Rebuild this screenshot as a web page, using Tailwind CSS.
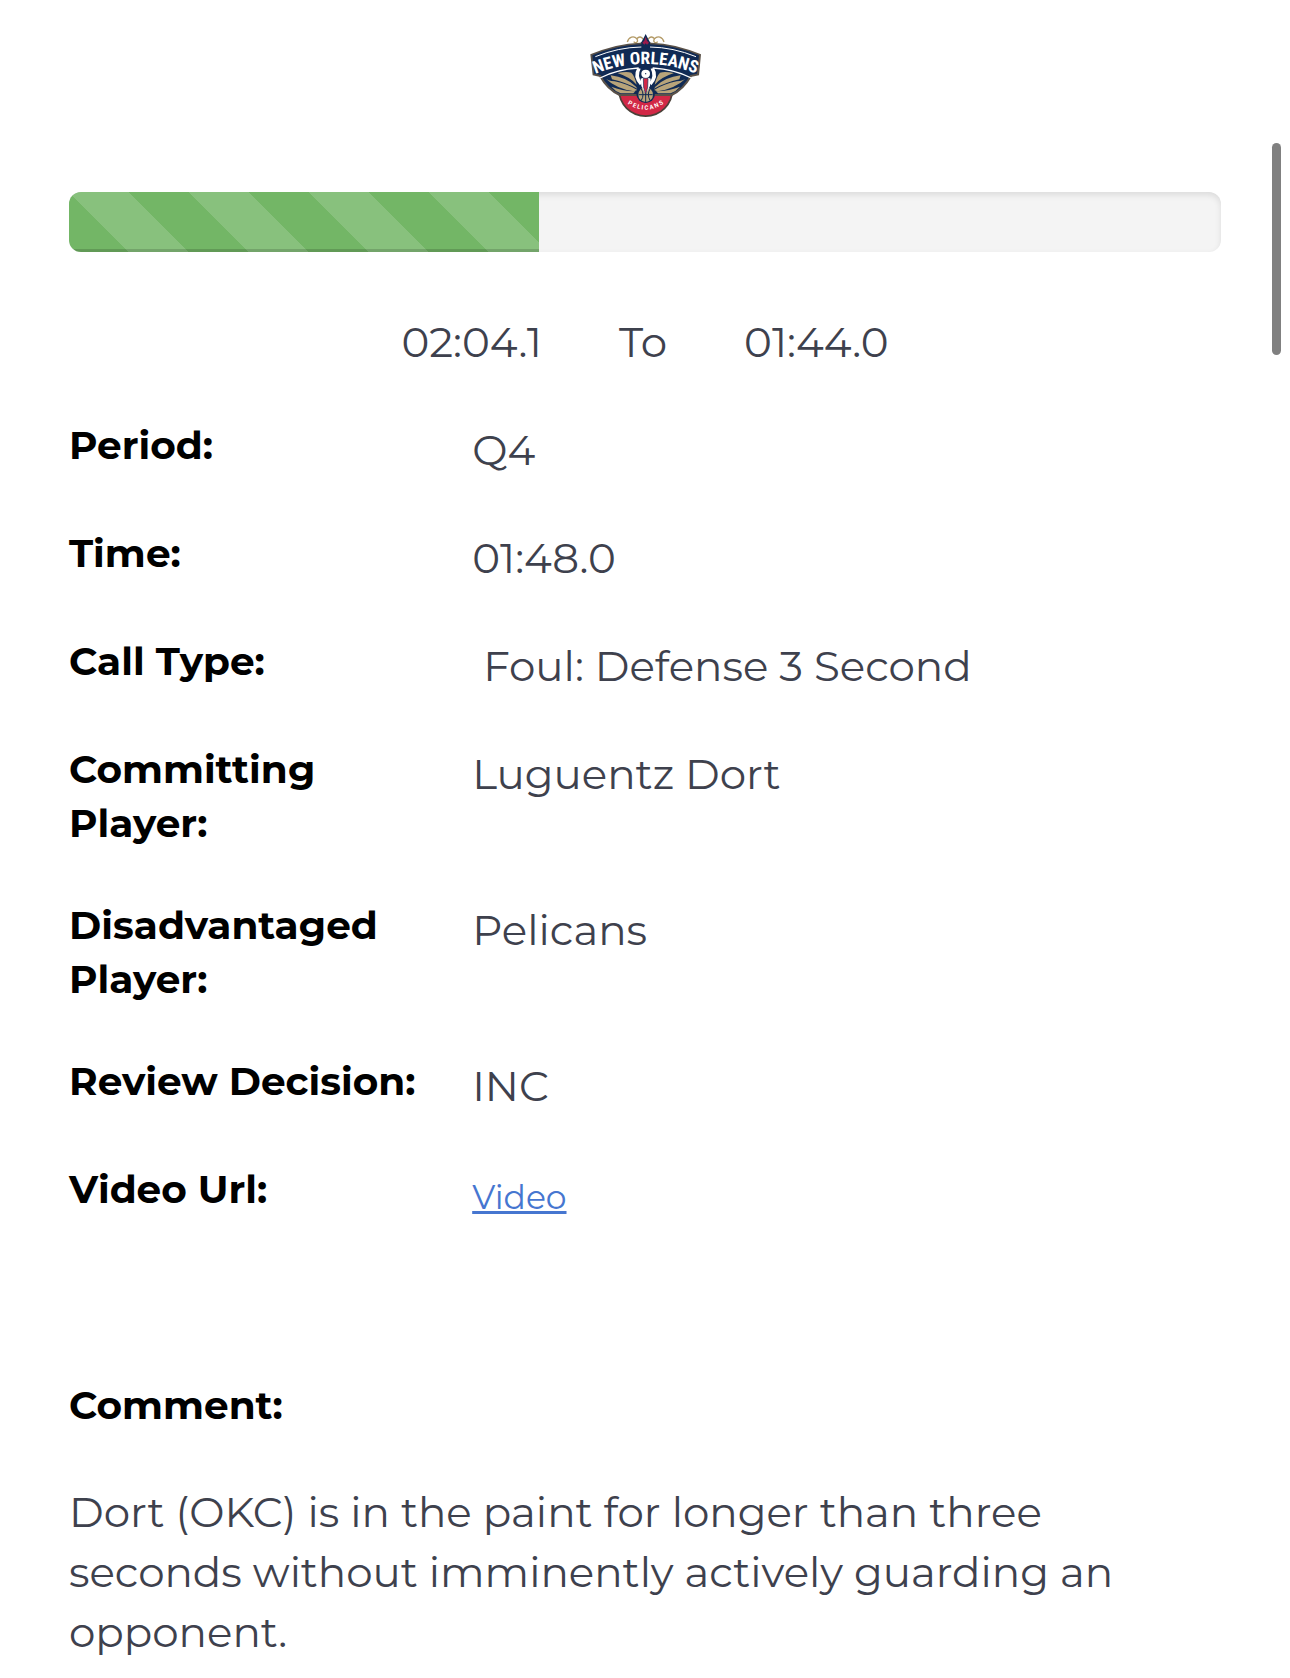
<!DOCTYPE html>
<html lang="en">
<head>
  <meta charset="UTF-8" />
  <title>Last Two Minute Report</title>
  <meta name="viewport" content="width=device-width, initial-scale=1.0" />
  <script src="https://cdn.jsdelivr.net/npm/@tailwindcss/browser@4"></script>
</head>
<body class="relative bg-white font-[Montserrat,Inter,sans-serif] text-[#3e414d]">

  <!-- scroll indicator -->
  <div class="absolute right-[9px] top-[143px] h-[212px] w-[9px] rounded-full bg-[#808080]"></div>

  <header class="flex justify-center pt-6">
    <svg class="h-[100px] w-[130px]" viewBox="0 0 390 300" role="img" aria-label="New Orleans Pelicans">
      <!-- crown -->
      <g fill="none" stroke="#b39a66" stroke-width="4">
        <path d="M142 54c4-16 20-20 28-10s-4 16-9 9M252 54c-4-16-20-20-28-10s4 16 9 9M170 44c8-8 14-6 20 2M224 44c-8-8-14-6-20 2" />
      </g>
      <!-- ball and red base -->
      <circle cx="197" cy="196" r="83" fill="#4a4038" />
      <circle cx="197" cy="196" r="78" fill="#d22846" />
      <!-- shield -->
      <path d="M31 91Q110 58 180 56L197 50L214 56Q284 58 363 91L357 154L335 158Q312 198 276 216L118 216Q80 198 58 158L38 154Z" fill="#5a5148" />
      <path d="M37 94Q112 63 182 61H212Q282 63 357 94L351 149L331 153Q309 194 273 210L121 210Q84 194 62 153L43 149Z" fill="#102a54" />
      <path d="M197 30L189 46L183 56L188 72H206L211 56L205 46Z" fill="#102a54" />
      <path d="M197 38L201 50L207 56L201 62L197 58L193 62L187 56L193 50Z" fill="#9b1b4b" />
      <path d="M46 98Q115 70 184 69M210 69Q279 70 348 98" fill="none" stroke="#fff" stroke-width="3" />
      <path d="M60 162Q110 136 176 132M218 132Q284 136 334 162" fill="none" stroke="#fff" stroke-width="4" />
      <path id="arc" d="M34 154Q115 120 197 120T360 154" fill="none" />
      <text class="font-['Liberation_Sans_Narrow','Roboto_Condensed',Roboto,sans-serif] text-[52px] font-bold" fill="#fff" text-anchor="middle"><textPath href="#arc" startOffset="50%">NEW ORLEANS</textPath></text>
      <!-- wings -->
      <g fill="#b8a47a">
        <path d="M112 147Q140 142 154 146Q164 156 170 182Q152 160 112 147Z" />
        <path d="M92 154Q140 160 168 188L172 194Q138 176 96 166Z" />
        <path d="M72 160Q84 172 104 172Q142 180 172 198L162 202Q110 196 72 160Z" />
        <path d="M94 188Q124 200 166 202L160 208H122Q106 202 94 188Z" />
        <path d="M282 147Q254 142 240 146Q230 156 224 182Q242 160 282 147Z" />
        <path d="M302 154Q254 160 226 188L222 194Q256 176 298 166Z" />
        <path d="M322 160Q310 172 290 172Q252 180 222 198L232 202Q284 196 322 160Z" />
        <path d="M300 188Q270 200 228 202L234 208H272Q288 202 300 188Z" />
      </g>
      <!-- pelican -->
      <path d="M172 132Q156 158 180 184L186 176Q170 156 182 134ZM222 132Q238 158 214 184L208 176Q224 156 212 134Z" fill="#fff" />
      <circle cx="197" cy="209" r="28" fill="#102a54" />
      <circle cx="197" cy="212" r="22" fill="#b8a47a" />
      <path d="M176 212H218M197 190V234M184 195Q194 212 184 229M210 195Q200 212 210 229" fill="none" stroke="#102a54" stroke-width="3" />
      <path d="M184 149Q184 137 197 137T210 149Q210 161 197 161T184 149Z" fill="#fff" />
      <path d="M182 164L197 158L212 164L210 186L197 210L184 186Z" fill="#fff" />
      <path d="M190 163H204L203 190L197 211L191 190Z" fill="#d22846" stroke="#102a54" stroke-width="2" />
      <circle cx="197" cy="149" r="2" fill="#102a54" />
      <path id="base" d="M133 232Q197 282 261 232" fill="none" />
      <text class="font-[Roboto,sans-serif] text-[18px] font-bold" fill="#fff" text-anchor="middle"><textPath href="#base" startOffset="50%">P E L I C A N S</textPath></text>
    </svg>
  </header>

  <main class="px-[69px] pt-[68px]">

    <div class="h-[60px] overflow-hidden rounded-xl bg-[#f4f4f4] shadow-[inset_0_3px_6px_rgba(0,0,0,0.1)]" role="progressbar" aria-valuenow="41" aria-valuemin="0" aria-valuemax="100">
      <div class="h-full bg-[#73b666] bg-[linear-gradient(45deg,rgba(255,255,255,0.15)_25%,transparent_25%,transparent_50%,rgba(255,255,255,0.15)_50%,rgba(255,255,255,0.15)_75%,transparent_75%)] bg-size-[120px_120px] shadow-[inset_0_-3px_0_rgba(0,0,0,0.15)]" style="width: 40.8%"></div>
    </div>

    <div class="flex justify-center gap-[77px] pt-[60px] text-[42px] leading-[60px]">
      <span>02:04.1</span>
      <span>To</span>
      <span>01:44.0</span>
    </div>

    <dl class="grid grid-cols-[35%_1fr] gap-y-12 pt-12 text-[42px] leading-[60px] [&>dt]:-mt-0.5 [&>dt]:pr-5 [&>dt]:text-[39px] [&>dt]:leading-[54px] [&>dt]:font-bold [&>dt]:text-black">
      <dt>Period:</dt>
      <dd>Q4</dd>
      <dt>Time:</dt>
      <dd>01:48.0</dd>
      <dt>Call Type:</dt>
      <dd>&nbsp;Foul: Defense 3 Second</dd>
      <dt class="mb-0.5">Committing Player:</dt>
      <dd>Luguentz Dort</dd>
      <dt class="mb-0.5">Disadvantaged Player:</dt>
      <dd>Pelicans</dd>
      <dt>Review Decision:</dt>
      <dd>INC</dd>
      <dt>Video Url:</dt>
      <dd><a href="#" class="text-[33px] text-[#4676d0] underline">Video</a></dd>
    </dl>

    <section class="pt-[151px]">
      <h2 class="text-[39px] leading-[54px] font-bold text-black">Comment:</h2>
      <p class="pt-[50px] text-[42px] leading-[60px]">Dort (OKC) is in the paint for longer than three seconds without imminently actively guarding an opponent.</p>
    </section>

  </main>

</body>
</html>
